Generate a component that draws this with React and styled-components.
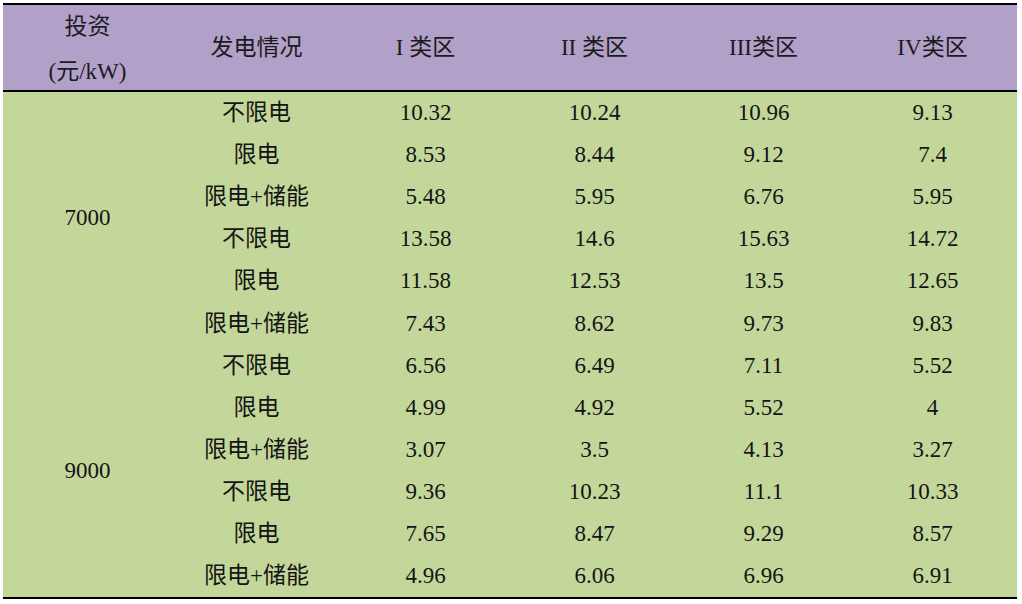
import React from 'react'
import styled, { createGlobalStyle } from 'styled-components'

const GlobalStyle = createGlobalStyle`
  html, body {
    margin: 0;
    padding: 0;
    background: #ffffff;
  }
`

const Page = styled.div`
  padding: 3px 0 0 3px;
  width: 1022px;
  height: 604px;
  box-sizing: border-box;
  overflow: hidden;
`

const Sheet = styled.div`
  display: grid;
  grid-template-columns: repeat(6, 169px);
  grid-template-rows: 87px repeat(12, 42.1px);
  width: 1014px;
  border-top: 2px solid #000;
  border-bottom: 2px solid #000;
  background: #c4d79b;
`

const HeadCell = styled.div`
  display: flex;
  flex-direction: column;
  align-items: center;
  justify-content: center;
  gap: ${p => (p.$stack ? '19px' : '0')};
  padding-top: ${p => (p.$stack ? '4px' : '0')};
  box-sizing: border-box;
  background: #b1a0c7;
  border-bottom: 2px solid #000;
  font-family: "Liberation Serif", "Noto Sans CJK SC", serif;
  font-size: 23px;
  line-height: 26px;
  color: #1c1a22;
`

const Cell = styled.div`
  display: flex;
  align-items: center;
  justify-content: center;
  grid-row: ${p => (p.$span ? `span ${p.$span}` : 'auto')};
  font-family: "Liberation Serif", "Noto Sans CJK SC", serif;
  font-size: 23px;
  line-height: 26px;
  color: #141414;
`

const zones = ['I 类区', 'II 类区', 'III类区', 'IV类区']

const groups = [
  {
    invest: '7000',
    rows: [
      ['不限电', '10.32', '10.24', '10.96', '9.13'],
      ['限电', '8.53', '8.44', '9.12', '7.4'],
      ['限电+储能', '5.48', '5.95', '6.76', '5.95'],
      ['不限电', '13.58', '14.6', '15.63', '14.72'],
      ['限电', '11.58', '12.53', '13.5', '12.65'],
      ['限电+储能', '7.43', '8.62', '9.73', '9.83'],
    ],
  },
  {
    invest: '9000',
    rows: [
      ['不限电', '6.56', '6.49', '7.11', '5.52'],
      ['限电', '4.99', '4.92', '5.52', '4'],
      ['限电+储能', '3.07', '3.5', '4.13', '3.27'],
      ['不限电', '9.36', '10.23', '11.1', '10.33'],
      ['限电', '7.65', '8.47', '9.29', '8.57'],
      ['限电+储能', '4.96', '6.06', '6.96', '6.91'],
    ],
  },
]

export default function App() {
  return (
    <Page>
      <GlobalStyle />
      <Sheet>
        <HeadCell $stack>
          <span>投资</span>
          <span>(元/kW)</span>
        </HeadCell>
        <HeadCell>发电情况</HeadCell>
        {zones.map(z => (
          <HeadCell key={z}>{z}</HeadCell>
        ))}
        {groups.map(g =>
          g.rows.map((r, i) => (
            <React.Fragment key={g.invest + i}>
              {i === 0 && <Cell $span={g.rows.length}>{g.invest}</Cell>}
              {r.map((v, j) => (
                <Cell key={j}>{v}</Cell>
              ))}
            </React.Fragment>
          ))
        )}
      </Sheet>
    </Page>
  )
}
